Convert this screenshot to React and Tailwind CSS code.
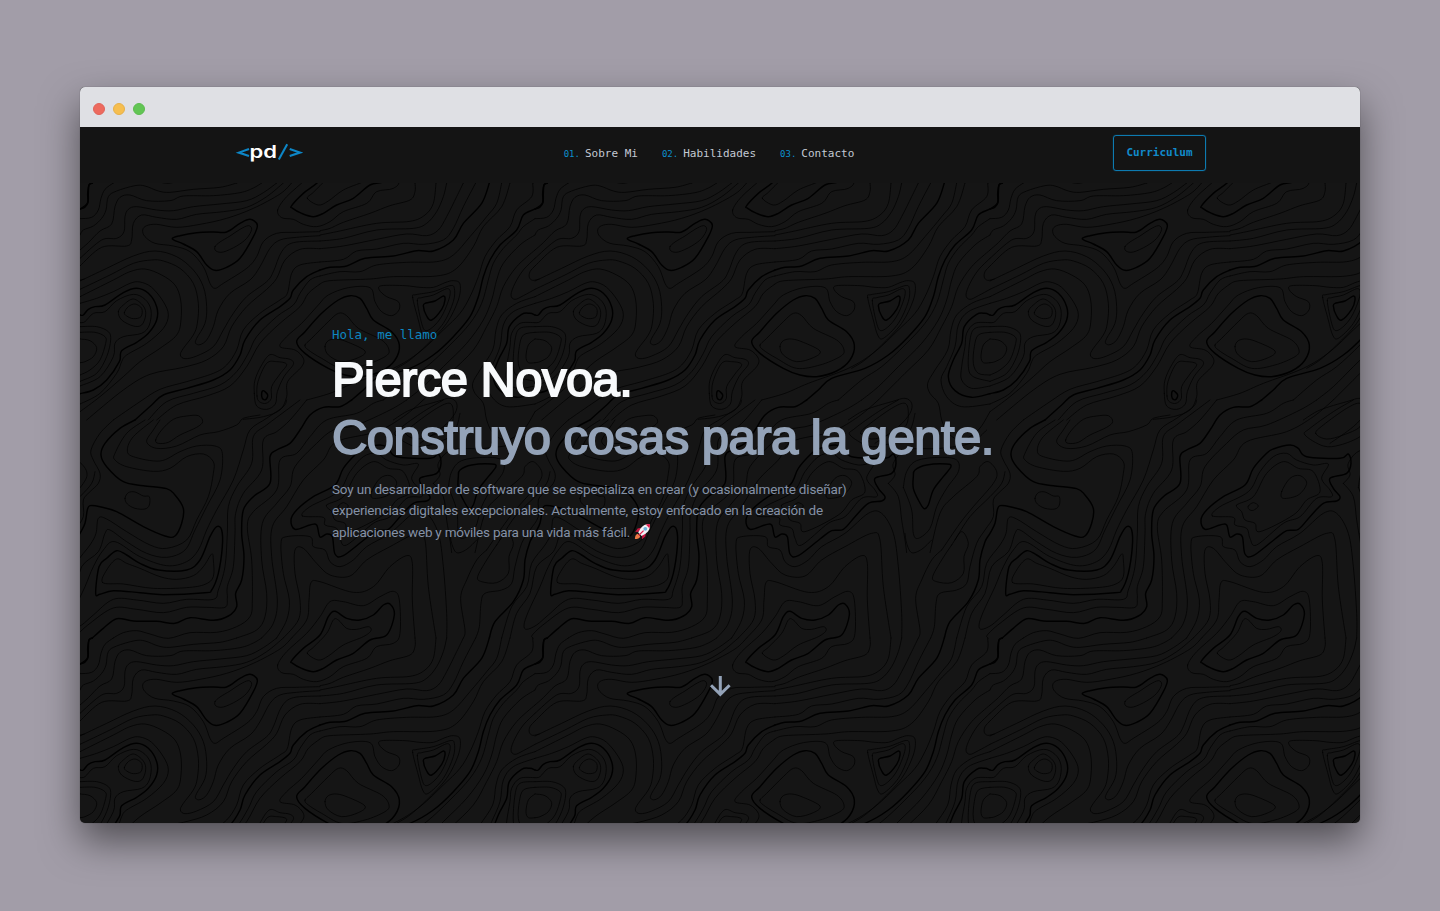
import React from "react";

const TILE = 455;

// Contour lines, grouped by the origin of their survey sheet; coordinates are thirds of a pixel.
// "T" marks an index (heavy) contour, "Z" a closed one.
const SHEETS = [
  {
    x: 80, y: 180,
    lines: `
T 37,9 27,15 25,40 24,68 14,82 0,87
- 100,9 75,28 63,55 55,90 35,112 0,116
- 0,165 10,150 40,138 65,115 78,90 85,50 110,33 165,17 195,18 235,33 270,37 340,28 420,22 470,9
- 0,210 25,188 60,153 95,132 105,80 120,52 150,45 200,62 270,62 310,48 400,47 480,38 520,24 545,9
- 0,235 65,180 110,175 132,155 135,110 145,88 170,80 230,90 280,92 340,80 420,72 500,62 550,38 590,9
- 0,258 65,202 140,198 155,180 160,130 185,105 230,112 290,118 350,103 430,95 500,82 560,50 610,9
- 635,9 600,42 520,85 440,115 360,133 290,142 230,133 200,137 188,150 195,170 225,190 280,198 330,215 370,260 390,310 405,325 430,310 500,265 530,230 550,185 590,160 650,157 720,155
TZ 277,177 300,167 350,158 400,156 440,156 480,130 510,118 532,135 520,170 480,235 440,262 405,271 380,255 350,215 310,192
Z 405,200 420,186 450,168 480,148 505,137 515,148 500,175 470,198 430,216 408,213
- 0,328 90,285 160,250 215,240 250,243 300,265 340,310 355,370 352,430 340,465 310,505 301,525 315,536 350,528 400,500 430,450 460,400 500,350 560,305 580,275 605,215 640,188 720,183
- 0,303 80,265 160,228 225,213 290,230 340,270 370,320 380,380 375,430 350,475 347,490 360,494 380,480 400,440 415,390 450,340 510,300 540,260 570,205 600,180 650,172 720,167
- 0,350 100,300 150,275 195,267 245,285 285,315 302,360 303,420 290,465 240,505 180,545 130,590 60,650 0,695
- 0,370 50,355 100,335 150,310 180,306 215,322 250,365 265,405 250,445 200,490 140,525 125,545 110,580 60,640 0,672
T 0,405 10,405 25,388 45,380 75,375 130,338 170,325 205,340 230,380 230,420 205,460 170,487 125,512 118,545 80,600 40,630 0,641
- 0,428 15,425 40,400 75,395 110,362 160,343 195,358 213,390 208,435 185,460 130,470 105,490 100,530 60,590 0,618
Z 115,395 130,375 160,357 190,378 197,405 185,435 160,438 125,420
Z 133,398 145,380 165,372 185,385 183,410 160,416 140,408
- 0,440 50,440 85,455 92,480 80,530 50,580 0,604
- 0,457 45,457 75,470 77,490 60,540 30,570 0,585
- 0,477 30,482 50,503 40,530 15,545 0,548
- 20,720 130,630 210,583 310,562 380,540 430,500 455,440 500,380 560,328 590,295 615,240 660,208 720,206
- 100,720 180,665 240,628 320,605 400,580 440,555 470,510 490,450 540,400 600,360 622,340 635,280 660,255 720,246
T 165,720 215,675 250,645 320,625 400,600 450,570 480,525 495,480 540,420 600,380 630,355 640,330 680,290 720,270
- 205,720 260,665 340,640 420,615 470,575 505,520 530,470 590,410 640,375 660,340 690,300 720,288
- 230,720 290,675 380,648 450,618 500,560 540,490 600,430 660,380 685,340 720,312
Z 523,640 525,600 545,555 570,524 600,533 630,538 640,553 612,590 592,635 586,672 560,688 530,678
Z 531,648 534,605 560,550 590,545 620,553 600,582 575,620 574,655 558,670 538,665
TZ 545,640 550,632 563,645 557,659 547,655
`,
  },
  {
    x: 205, y: 195,
    lines: `
TZ 275,440 300,410 350,355 400,315 435,302 465,310 485,340 505,375 560,410 583,450 570,495 530,528 470,545 420,540 370,520 300,475
Z 300,450 320,430 370,380 400,355 425,362 460,400 530,435 552,465 540,485 480,510 410,520 350,490 310,465
Z 360,455 370,437 395,432 430,442 480,468 460,488 410,500 370,480
- 115,673 175,665 225,645 245,605 248,560 290,515 295,490 270,465 225,455 245,425 290,385 340,330 370,300 430,278 495,278 510,320 530,350 560,362 582,345 580,320 545,305 523,285 530,272 600,272 645,277 685,277 720,263 745,257 765,267 760,315 725,385 665,450 615,495 575,520
`,
  },
  {
    x: 310, y: 180,
    lines: `
- 30,152 60,145 100,127 180,100 240,77 300,60 315,35 315,9
- 30,165 80,155 200,130 300,124 345,105 370,70 378,9
- 30,183 100,175 200,150 310,145 350,130 380,95 400,50 410,9
- 30,206 100,198 200,178 290,162 350,167 385,150 410,110 440,50 460,9
- 30,246 100,238 140,213 200,207 280,190 340,193 400,180 430,145 460,80 497,9
T 30,270 60,262 110,258 165,235 250,228 320,212 370,213 430,180 460,130 515,70 538,9
- 30,288 90,275 150,275 200,255 290,247 380,245 430,225 480,170 530,110 560,70 575,9
- 30,312 60,302 180,297 250,290 380,288 440,265 490,200 520,140 575,80 600,9
T 712,9 702,15 698,40 697,70 675,87 640,105 620,150 570,195 540,240 520,290 505,350 480,410 430,470 370,525 300,565 200,595 160,630 125,660
- 668,9 665,50 620,90 600,140 560,180 525,230 505,290 480,350 450,400 400,450 330,515 250,565 130,610 60,640 -10,660
- 675,116 640,140 620,165 580,205 550,250 535,300 515,370 480,430 420,495 350,560 290,600 220,660
- 675,165 630,195 580,250 560,300 545,360 520,420 470,490 400,560 340,620 290,660
- 675,210 620,260 580,320 560,380 530,440 490,510 420,580 340,660
- 675,235 640,270 615,310 603,345 615,358 640,347 675,328
- 675,258 660,275 658,292 668,301 688,297
- 675,350 620,370 575,405 558,450 548,510 510,570 488,610 495,640 520,670 530,720 550,760 590,780 640,750 675,695
- 675,370 610,395 580,435 570,500 545,560 528,600 545,650 590,680 675,672
T 675,405 660,400 635,403 598,440 590,490 565,540 550,590 570,632 620,652 675,641
- 675,428 630,430 605,460 600,500 590,560 590,600 620,625 675,618
- 675,440 630,445 615,480 610,560 625,590 675,604
- 675,457 640,465 628,500 625,550 640,580 675,585
- 675,477 655,495 648,530 655,548 675,548
TZ 340,377 348,369 375,363 400,348 405,360 395,388 365,420 350,408
Z 322,362 335,353 370,345 412,326 420,345 400,400 375,435 348,452 335,430
Z 308,352 318,344 370,335 420,317 433,325 430,365 400,430 355,475 338,465 325,420
- 250,720 300,690 380,665 420,655 440,670 435,700 400,740 330,790
`,
  },
  {
    x: 90, y: 400,
    lines: `
T 135,60 90,85 45,130 33,165 50,200 100,245 160,257 230,266 255,285 280,325 275,370 255,408 225,408 160,380 80,335 30,320 0,317 -8,330 -15,370 -30,400 -45,425 -60,480 -65,540 -95,605 -150,665 -167,714
- 70,60 30,100 3,150 10,180 30,220 25,250 0,275 -20,300 -20,350 -45,390 -70,430 -90,500 -100,550 -130,570 -180,580 -192,610 -197,680 -208,714
- 165,60 110,100 75,160 75,180 110,200 190,214 240,205 290,170 340,162 370,185 370,220 355,290 320,360 290,420 230,445 180,435 110,395 50,357 25,355 18,400 0,435 -40,490 -55,560 -100,620 -130,714
- 190,60 130,110 112,150 130,170 210,183 270,155 320,138 375,138 397,160 390,240 350,320 315,390 285,450 230,472 170,460 110,425 60,390 45,400 25,455 -25,500 -45,580 -85,640 -105,714
- 210,60 190,90 170,125 200,145 260,138 330,105 385,95 440,75 460,55 510,45
Z 197,120 215,90 250,58 290,48 325,47 338,65 320,82 270,105 235,127 205,130
Z 105,295 115,278 135,276 160,288 178,290 178,315 165,327 135,325 112,312
- 590,0 580,20 530,55 480,90 460,150 430,240 380,330 350,390 325,450 290,485 230,497 150,470 75,425 40,450 10,500 -15,560 -50,635 -63,675 -55,688 -25,675 10,645 70,598 140,600 220,610 290,598 370,598 385,570 405,500 412,400 415,320 440,260 485,190 490,110 530,75 590,30 630,0
TZ 27,500 50,475 80,452 110,465 150,490 205,510 290,510 330,480 360,410 380,380 395,390 397,440 385,520 365,570 345,578 220,584 150,578 70,572 30,583 17,580
Z 38,548 50,510 80,477 110,490 150,505 210,530 260,538 310,527 340,500 365,462 370,480 370,530 345,553 290,563 190,565 100,552
- -35,714 -38,705 0,670 70,624 140,628 220,638 290,622 350,622 405,622 412,595 412,560 430,500 435,400 437,340 460,280 515,210 520,120 560,95 600,60 650,0
T 7,714 40,685 80,656 130,663 200,664 255,670 300,653 370,661 415,648 440,620 437,580 455,540 462,470 455,400 460,330 490,290 540,250 540,170 560,150 600,130 630,90 660,45 700,22 750,20 785,0
- 70,714 100,698 140,692 180,702 235,715 300,698 380,697 440,680 480,650 487,600 485,480 472,380 490,335 560,270 570,180 620,160 660,110 710,60 800,40 850,10 880,0
- 440,714 500,690 525,650 530,580 515,480 517,370 560,310 600,260 615,200 680,130 730,90 800,75 900,30 950,0
- 515,714 550,670 562,600 545,470 547,380 590,320 640,240 700,180 740,125 860,95 940,50 1000,0
- 560,714 590,660 598,600 580,520 573,430 590,410 660,410 670,440 705,450 720,485 750,500 790,480 830,440 900,400 970,340 1010,340 1045,400 1060,500 1070,640 1070,714
- 580,714 625,660 630,600 615,520 615,450 640,445 680,490 720,525 780,528 830,480 900,440 980,400 1005,420 1015,560 1038,714
- 605,714 650,660 657,600 663,548 690,545 790,577 850,560 900,500 950,467 967,490 967,600 975,714
Z 563,795 590,755 650,700 690,650 720,605 760,605 820,617 870,590 910,574 928,600 930,700 910,730 860,740 830,775 760,800 720,830 680,845 640,838 610,823 575,818
TZ 605,782 640,745 690,705 715,650 735,634 770,655 810,660 850,645 880,615 900,612 913,645 890,705 840,720 790,760 740,780 700,805 670,815 635,805 608,790
Z 652,760 670,742 710,700 730,660 745,660 770,685 800,688 835,680 843,692 820,710 760,735 715,768 685,780
TZ 603,360 620,330 670,290 735,255 760,205 800,160 820,147 870,135 895,145 920,170 1020,175 1045,162 1053,190 1040,220 990,235 1000,265 1020,290 1010,303 970,310 930,350 895,388 860,392 825,417 760,467 735,462 727,410 710,402 690,411 680,375 660,375 615,388
Z 637,348 660,320 745,275 780,215 820,170 860,160 890,180 940,195 985,192 965,235 990,270 995,290 950,295 900,350 850,370 770,435 750,415 740,385 705,375 700,352
Z 710,315 760,290 800,220 850,185 895,205 940,215 960,275 920,300 880,345 780,395 765,370 735,360 725,335
Z 845,275 870,235 900,227 920,250 895,285 850,295
Z 745,318 760,308 775,318 760,331 747,328
- 1060,0 1000,35 930,85 915,105 970,138 1020,135 1080,110 1100,80 1110,40
Z 947,100 970,75 1040,25 1080,10 1090,40 1080,80 1030,105 980,117
`,
  },
  {
    x: 185, y: 400,
    lines: `
TZ 820,230 825,210 860,195 920,192 933,200 910,230 880,270 865,315 852,326 835,300 820,265
- 745,250 765,225 760,190 800,150 900,145 990,130 1040,90
- 745,250 775,290 785,360 795,420 800,458
- 790,262 800,215 830,182 900,172 950,180 955,215 920,265 890,320 870,385 835,415 820,400 815,330 790,262
- 870,458 900,340 940,290 1010,230 1020,200 1045,185 1070,215 1060,250 1000,320 960,370 905,450
- 945,420 990,350 1050,290 1085,250 1095,215
`,
  },
  {
    x: 310, y: 540,
    lines: `
- 530,30 500,60 470,120 452,175 465,270 460,294
Z 560,15 530,60 503,110 515,125 560,128 595,100 597,50 610,10 590,-25
- 420,-20 425,10 440,38 470,28 500,0
`,
  },
];

function curve(points, closed) {
  const n = points.length;
  const at = (i) => (closed ? points[(i + n) % n] : points[Math.max(0, Math.min(n - 1, i))]);
  let d = `M${points[0][0]} ${points[0][1]}`;
  for (let i = 0; i < (closed ? n : n - 1); i++) {
    const [a, b, c, e] = [at(i - 1), at(i), at(i + 1), at(i + 2)];
    const f = (v) => v.toFixed(1);
    d += `C${f(b[0] + (c[0] - a[0]) / 6)} ${f(b[1] + (c[1] - a[1]) / 6)} ${f(c[0] - (e[0] - b[0]) / 6)} ${f(c[1] - (e[1] - b[1]) / 6)} ${c[0]} ${c[1]}`;
  }
  return closed ? d + "Z" : d;
}

function parse(lines) {
  return lines
    .trim()
    .split("\n")
    .filter((l) => l.trim())
    .map((l) => {
      const [kind, ...pts] = l.trim().split(/\s+/);
      return {
        heavy: kind.includes("T"),
        d: curve(pts.map((p) => p.split(",").map(Number)), kind.includes("Z")),
      };
    });
}

function Topography() {
  const shifts = [-1, 0, 1];
  return (
    <svg className="absolute inset-0 h-full w-full" aria-hidden="true">
      <defs>
        <g id="contours" fill="none" stroke="#000" strokeLinecap="round">
          {SHEETS.map((s, i) => (
            <g key={i} transform={`translate(${s.x - 80} ${s.y - 183}) scale(0.33333)`}>
              {parse(s.lines).map((l, j) => (
                <path key={j} d={l.d} strokeWidth={l.heavy ? 4.4 : 3} strokeOpacity={l.heavy ? 1 : 0.72} />
              ))}
            </g>
          ))}
        </g>
        <pattern id="topo" width={TILE} height={TILE} patternUnits="userSpaceOnUse">
          {shifts.map((a) => shifts.map((b) => <use key={`${a}${b}`} href="#contours" x={a * TILE} y={b * TILE} />))}
        </pattern>
      </defs>
      <rect width="100%" height="100%" fill="url(#topo)" />
    </svg>
  );
}

function Logo() {
  return (
    <svg width="68" height="24" viewBox="0 0 68 24" fill="none" stroke="#0d86c6" strokeWidth="2.1">
      <path d="M14 8.900 3.800 12.600l10.200 3.500" />
      <path d="M52.200 4.200 43.800 19.400" />
      <path d="M54.700 8.900 64.900 12.600l-10.200 3.500" />
      <text x="14.5" y="17.600" textLength="27.500" lengthAdjust="spacingAndGlyphs" fill="#fff" stroke="none" className="font-['Inter'] text-[17.500px] font-semibold">
        pd
      </text>
    </svg>
  );
}

function Rocket() {
  return (
    <svg width="17" height="17" viewBox="0 0 17 17" className="ml-1 inline-block align-[-3px]">
      <path d="M7.2 4.8 3.6 5.6 1.2 9l3.6-.3zM12 9.6l-.7 3.8-3.3 2.8.2-4z" fill="#c6143f" />
      <path d="M16 1c-4-.2-7 1.200-9.500 4.600L4.200 9.500 7.600 13l3.900-2.300C15 8.200 16.400 5.300 16 1z" fill="#f1f0f4" />
      <path d="M16 1c-1.600-.1-3 .1-4.200.6L15.400 5.200C15.900 4 16.100 2.600 16 1z" fill="#dc1d4c" />
      <path d="m9.200 7.200.8.800-5.200 5.200-.9-.9z" fill="#dc1d4c" />
      <circle cx="11.300" cy="5.800" r="1.900" fill="#6cb4dc" />
      <path d="M3.600 10.800c-1.800.6-2.600 2.400-2.700 5.300 2.900-.2 4.600-.9 5.300-2.700z" fill="#ef7a45" />
    </svg>
  );
}

const LINKS = [
  ["01.", "Sobre Mi"],
  ["02.", "Habilidades"],
  ["03.", "Contacto"],
];

export default function App() {
  return (
    <div className="flex h-[911px] w-full items-start justify-center bg-[#a29da8] pt-[87px]">
      <div className="flex h-[736px] w-[1280px] flex-col overflow-hidden rounded-[5px] bg-[#151515] shadow-[0_0_1px_rgba(0,0,0,0.5),0_18px_38px_rgba(0,0,0,0.5)]">
        <div className="flex h-10 shrink-0 items-center gap-2 bg-[#dfe0e4] pt-1 pl-[13px]">
          <span className="size-3 rounded-full border border-[#e0635a] bg-[#ed6a5e]" />
          <span className="size-3 rounded-full border border-[#e6b048] bg-[#f6be4f]" />
          <span className="size-3 rounded-full border border-[#5cbb4e] bg-[#62c554]" />
        </div>

        <header className="flex h-14 shrink-0 items-start justify-between bg-[#141414] pr-[154px] pl-[155px]">
          <div className="w-[240px] pt-[13px]">
            <Logo />
          </div>
          <nav className="flex gap-[24px] pt-[19px] pr-[23px] font-['DejaVu_Sans_Mono',monospace] text-[11px] leading-4 text-[#c3c9d3]">
            {LINKS.map(([n, label]) => (
              <a key={n} className="flex items-baseline gap-[5px]">
                <span className="text-[9px] text-[#0d8fcc]">{n}</span>
                <span>{label}</span>
              </a>
            ))}
          </nav>
          <div className="flex w-[240px] justify-end pt-2">
            <a className="flex h-9 w-[93px] items-center justify-center rounded-[3px] border-[1.500px] border-[#0d7ab0] pt-px font-['DejaVu_Sans_Mono',monospace] text-[11px] font-bold text-[#118aca] shadow-[0_0_1px_#0d7ab0]">
              Curriculum
            </a>
          </div>
        </header>

        <main className="relative flex-1">
          <Topography />
          <div className="relative flex h-full flex-col pl-[252px]">
            <p className="mt-[143px] font-['DejaVu_Sans_Mono',monospace] text-[12.500px] leading-[18px] text-[#0d86c0]">Hola, me llamo</p>
            <h1 className="mt-[6px] font-['Liberation_Sans',Arial,sans-serif] text-[49px] leading-[58px] font-normal tracking-[-0.570px] whitespace-nowrap text-[#f8fafc] [-webkit-text-stroke:1.800px_#f8fafc]">
              Pierce Novoa.
            </h1>
            <h2 className="font-['Liberation_Sans',Arial,sans-serif] text-[49px] leading-[58px] font-normal tracking-[-0.550px] whitespace-nowrap text-[#94a3b8] [-webkit-text-stroke:1.800px_#94a3b8]">
              Construyo cosas para la gente.
            </h2>
            <p className="mt-[13px] font-['Roboto',sans-serif] text-[13.500px] leading-[21.300px] tracking-[-0.170px] whitespace-nowrap text-[#8491a6]">
              <span>Soy un desarrollador de software que se especializa en crear (y ocasionalmente diseñar)</span>
              <br />
              <span className="tracking-[-0.180px]">experiencias digitales excepcionales. Actualmente, estoy enfocado en la creación de</span>
              <br />
              <span className="tracking-[-0.220px]">aplicaciones web y móviles para una vida más fácil.</span>
              <Rocket />
            </p>
            <svg width="22" height="22" viewBox="0 0 22 22" className="mt-[132px] ml-[377px]" fill="none" stroke="#94a3b8" strokeWidth="3">
              <path d="M11.300 1v18M2 10.200l9.300 9.200 9.300-9.200" />
            </svg>
          </div>
        </main>
      </div>
    </div>
  );
}
